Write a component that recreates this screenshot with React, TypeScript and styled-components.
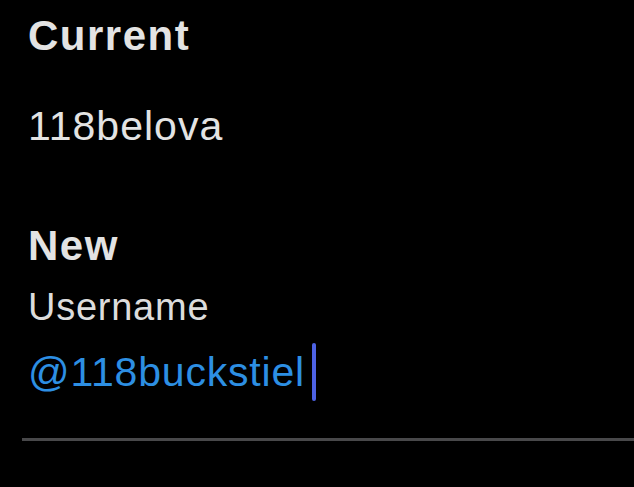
import React from "react";
import styled, { createGlobalStyle } from "styled-components";

const GlobalStyle = createGlobalStyle`
  html, body {
    margin: 0;
    padding: 0;
    background: #000;
  }
  body {
    font-family: "Liberation Sans", Arial, sans-serif;
  }
`;

// Styles
const Page = styled.div`
  width: 634px;
  height: 487px;
  background: #000;
  overflow: hidden;
  display: flex;
  flex-direction: column;
  padding-top: 12px;
  box-sizing: border-box;
`;
const Form = styled.div`
  display: flex;
  flex-direction: column;
  padding-left: 28px;
`;
const Heading = styled.div<{ $gap?: number }>`
  margin-top: ${(p) => p.$gap ?? 0}px;
  font-size: 42px;
  line-height: 48px;
  font-weight: 700;
  letter-spacing: 1.5px;
  color: #e3e3e3;
`;
const Value = styled.div<{ $gap?: number }>`
  margin-top: ${(p) => p.$gap ?? 0}px;
  font-size: 41px;
  line-height: 48px;
  letter-spacing: 1px;
  color: #e3e3e3;
`;
const Label = styled.div<{ $gap?: number }>`
  margin-top: ${(p) => p.$gap ?? 0}px;
  font-size: 38px;
  line-height: 44px;
  letter-spacing: 0.75px;
  color: #dcdcdc;
`;
const InputRow = styled.div`
  margin-top: 13px;
  height: 60px;
  display: flex;
  align-items: center;
  gap: 7px;
`;
const InputText = styled.span`
  font-size: 41px;
  line-height: 60px;
  letter-spacing: 0.8px;
  color: #2d8fe3;
`;
const Caret = styled.span`
  width: 4px;
  height: 58px;
  border-radius: 2px;
  background: #4d62e4;
`;
const Divider = styled.div`
  margin: 36px 0 0 22px;
  height: 3px;
  background: #48484a;
`;

const App: React.FC = () => {
  return (
    <>
      <GlobalStyle />
      <Page>
        <Form>
          <Heading>Current</Heading>
          <Value $gap={42}>118belova</Value>
          <Heading $gap={72}>New</Heading>
          <Label $gap={15}>Username</Label>
          <InputRow>
            <InputText>@118buckstiel</InputText>
            <Caret />
          </InputRow>
        </Form>
        <Divider />
      </Page>
    </>
  );
};

export default App;
